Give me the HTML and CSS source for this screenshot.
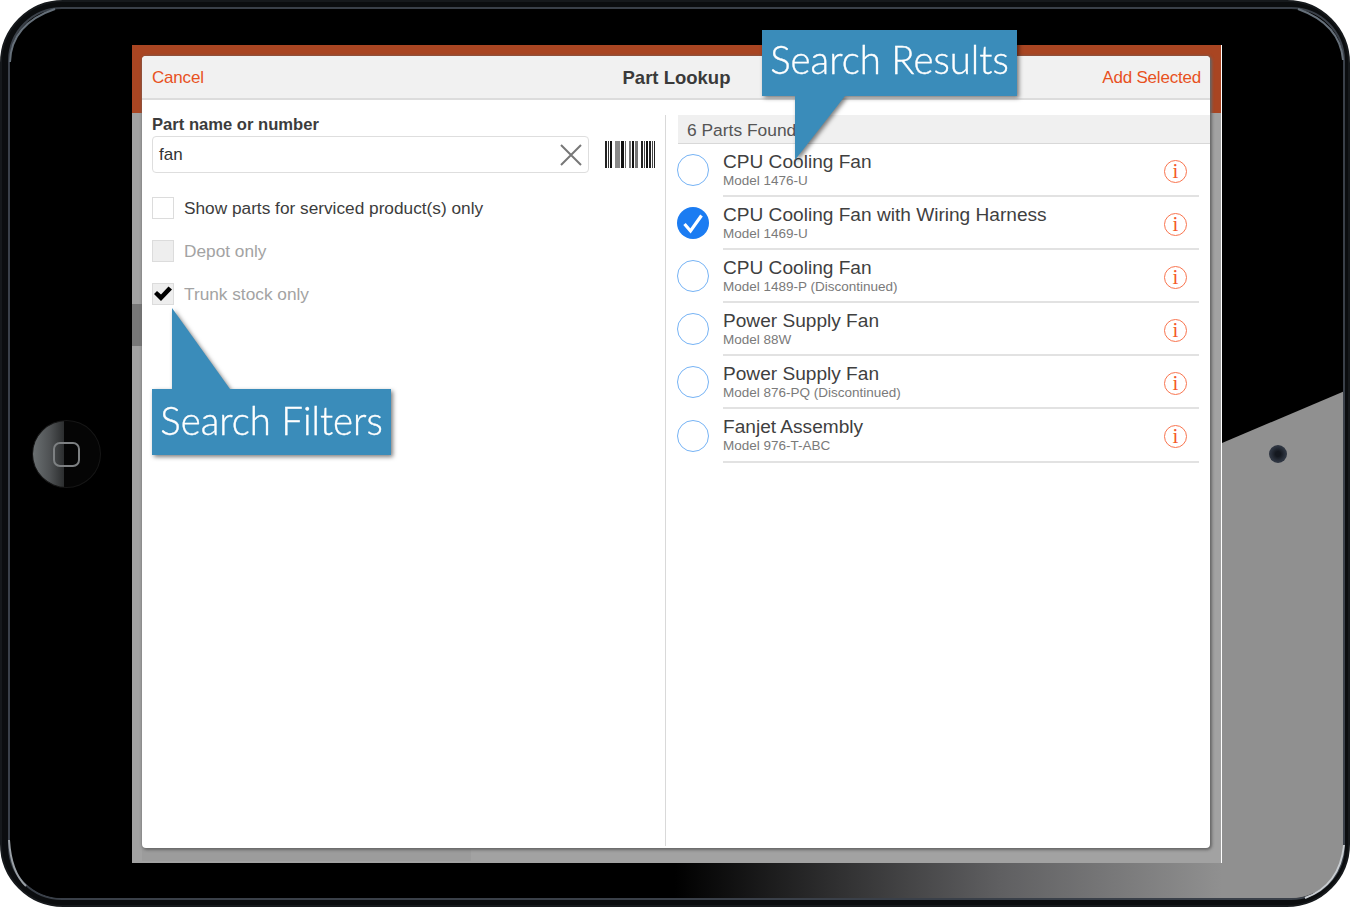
FILE: index.html
```html
<!DOCTYPE html>
<html lang="en">
<head>
    <meta charset="UTF-8">
    <title>Part Lookup</title>
    <link rel="stylesheet" href="styles.css">
</head>
<body>
    <div class="device">
        <!-- Tablet body, glare and rim -->
        <svg class="bezel" width="1350" height="907" viewBox="0 0 1350 907">
            <defs>
                <linearGradient id="glare-bottom" x1="0" y1="0" x2="1" y2="0">
                    <stop offset="0" stop-color="#000"/>
                    <stop offset="0.5" stop-color="#000"/>
                    <stop offset="0.74" stop-color="#5f5f61"/>
                    <stop offset="0.905" stop-color="#909090"/>
                    <stop offset="1" stop-color="#909090"/>
                </linearGradient>
                <clipPath id="body-clip">
                    <rect x="10" y="9" width="1333" height="889" rx="52"/>
                </clipPath>
            </defs>
            <rect x="1" y="1" width="1348" height="905" rx="62" fill="#0b0d0f" stroke="#16191c" stroke-width="2"/>
            <rect x="9" y="8" width="1335" height="891" rx="53" fill="#000" stroke="#3a4049" stroke-width="2"/>
            <g clip-path="url(#body-clip)">
                <rect x="0" y="863" width="1350" height="36" fill="url(#glare-bottom)"/>
                <polygon points="1222,443 1345,391 1345,900 1222,900" fill="#909090"/>
            </g>
            <g fill="none" stroke-width="2">
                <path d="M10 62 Q11 24 55 9" stroke="#66707a"/>
                <path d="M1343 60 Q1340 24 1298 9" stroke="#66707a"/>
                <path d="M9 840 Q11 872 26 886" stroke="#9aa0a6"/>
                <path d="M1344 845 Q1340 885 1305 898" stroke="#c8ccd0"/>
            </g>
        </svg>
        <div class="home-button"><span class="home-square"></span></div>
        <div class="camera"></div>

        <div class="screen">
            <div class="scroll-thumb"></div>
            <div class="modal">
                <div class="modal-header">
                    <a class="header-link">Cancel</a>
                    <h1>Part Lookup</h1>
                    <a class="header-link add-link">Add Selected</a>
                </div>
                <div class="modal-body">
                    <div class="filters">
                        <label class="field-label">Part name or number</label>
                        <div class="search-row">
                            <div class="search-input">
                                <span>fan</span>
                                <svg class="clear-icon" width="24" height="24" viewBox="0 0 24 24"><path d="M2 2 L22 22 M22 2 L2 22" stroke="#777" stroke-width="2" fill="none"/></svg>
                            </div>
                            <svg class="barcode" width="50" height="27" viewBox="0 0 50 27">
                                <rect x="0" width="2" height="27" fill="#222"/>
                                <rect x="3" width="1" height="27" fill="#333"/>
                                <rect x="5" width="2" height="27" fill="#111"/>
                                <rect x="10" width="5" height="27" fill="#8a8a8a"/>
                                <rect x="16" width="3" height="27" fill="#111"/>
                                <rect x="20" width="1" height="27" fill="#666"/>
                                <rect x="24" width="2" height="27" fill="#777"/>
                                <rect x="27" width="2" height="27" fill="#111"/>
                                <rect x="30" width="3" height="27" fill="#777"/>
                                <rect x="36" width="2" height="27" fill="#222"/>
                                <rect x="39" width="1" height="27" fill="#444"/>
                                <rect x="41" width="2" height="27" fill="#111"/>
                                <rect x="44" width="2" height="27" fill="#222"/>
                                <rect x="47" width="1" height="27" fill="#444"/>
                                <rect x="49" width="1" height="27" fill="#222"/>
                            </svg>
                        </div>
                        <div class="check-row">
                            <span class="checkbox"></span>
                            <span>Show parts for serviced product(s) only</span>
                        </div>
                        <div class="check-row disabled">
                            <span class="checkbox"></span>
                            <span>Depot only</span>
                        </div>
                        <div class="check-row disabled last-check">
                            <span class="checkbox">
                                <svg width="20" height="20" viewBox="0 0 20 20"><path d="M1 10 L4 7 L8 10.5 L15.5 2.5 L19 5.5 L8 17 Z" fill="#000"/></svg>
                            </span>
                            <span>Trunk stock only</span>
                        </div>
                    </div>
                    <div class="results">
                        <div class="results-head">6 Parts Found</div>
                        <div class="part-row">
                            <span class="radio"></span>
                            <div class="part-info">
                                <div class="part-text"><div class="part-name">CPU Cooling Fan</div><div class="part-model">Model 1476-U</div></div>
                                <span class="info-icon">i</span>
                            </div>
                        </div>
                        <div class="part-row">
                            <span class="radio selected">
                                <svg width="32" height="32" viewBox="0 0 32 32"><path d="M7.5 17 L13.5 24 L24.5 8.5" fill="none" stroke="#fff" stroke-width="3.2"/></svg>
                            </span>
                            <div class="part-info">
                                <div class="part-text"><div class="part-name">CPU Cooling Fan with Wiring Harness</div><div class="part-model">Model 1469-U</div></div>
                                <span class="info-icon">i</span>
                            </div>
                        </div>
                        <div class="part-row">
                            <span class="radio"></span>
                            <div class="part-info">
                                <div class="part-text"><div class="part-name">CPU Cooling Fan</div><div class="part-model">Model 1489-P (Discontinued)</div></div>
                                <span class="info-icon">i</span>
                            </div>
                        </div>
                        <div class="part-row">
                            <span class="radio"></span>
                            <div class="part-info">
                                <div class="part-text"><div class="part-name">Power Supply Fan</div><div class="part-model">Model 88W</div></div>
                                <span class="info-icon">i</span>
                            </div>
                        </div>
                        <div class="part-row">
                            <span class="radio"></span>
                            <div class="part-info">
                                <div class="part-text"><div class="part-name">Power Supply Fan</div><div class="part-model">Model 876-PQ (Discontinued)</div></div>
                                <span class="info-icon">i</span>
                            </div>
                        </div>
                        <div class="part-row">
                            <span class="radio"></span>
                            <div class="part-info">
                                <div class="part-text"><div class="part-name">Fanjet Assembly</div><div class="part-model">Model 976-T-ABC</div></div>
                                <span class="info-icon">i</span>
                            </div>
                        </div>
                    </div>
                </div>
            </div>
            <div class="screen-strip"></div>
        </div>

        <!-- Annotations on top of the screenshot -->
        <div class="callout callout-results">
            <div class="callout-box">Search Results</div>
            <svg class="callout-tail" width="50" height="64" viewBox="0 0 50 64"><polygon points="0,0 50,0 0,64" fill="#3a8cba"/></svg>
        </div>
        <div class="callout callout-filters">
            <svg class="callout-tail" width="58" height="81" viewBox="0 0 58 81"><polygon points="0,0 0,81 58,81" fill="#3a8cba"/></svg>
            <div class="callout-box">Search Filters</div>
        </div>
    </div>
</body>
</html>
```

FILE: styles.css
```css
* {
    box-sizing: border-box;
}
body {
    margin: 0;
    background-color: #fff;
    font-family: 'Liberation Sans', Arial, sans-serif;
    color: #3c3c3c;
}
.device {
    position: relative;
    width: 1350px;
    height: 907px;
    padding: 45px 0 0 132px;
}
.bezel {
    position: absolute;
    left: 0;
    top: 0;
}
.home-button {
    position: absolute;
    left: 32px;
    top: 420px;
    width: 69px;
    height: 68px;
    border-radius: 50%;
    border: 1px solid #161616;
    background: linear-gradient(90deg, #6a6f71 0%, #4f5254 25%, #2c2e2f 46%, #050505 47%, #050505 100%);
    display: flex;
    align-items: center;
    justify-content: center;
}
.home-square {
    width: 27px;
    height: 25px;
    border: 2px solid #7d8082;
    border-radius: 7px;
}
.camera {
    position: absolute;
    left: 1269px;
    top: 445px;
    width: 18px;
    height: 18px;
    border-radius: 50%;
    background: radial-gradient(circle, #14181f 20%, #2d3440 60%, #3a404a 100%);
}
.screen {
    position: relative;
    width: 1090px;
    height: 818px;
    padding: 11px 0 0 10px;
    border-right: 1px solid #fff;
    background: linear-gradient(#a94522 68px, #a2a2a2 68px);
}
.scroll-thumb {
    position: absolute;
    left: 0;
    top: 259px;
    width: 10px;
    height: 42px;
    background-color: #777;
}
.screen-strip {
    position: absolute;
    left: 10px;
    bottom: 2px;
    width: 329px;
    height: 12px;
    background-color: #9c9c9c;
}
.modal {
    position: relative;
    z-index: 1;
    width: 1068px;
    height: 792px;
    background-color: #fff;
    border-radius: 4px;
    box-shadow: 1px 1px 3px 1px #666;
    display: flex;
    flex-direction: column;
}
.modal-header {
    height: 44px;
    flex: none;
    padding: 2px 9px 0 10px;
    display: grid;
    grid-template-columns: 1fr auto 1fr;
    align-items: center;
    background-color: #f1f1f1;
    border-bottom: 2px solid #dcdcdc;
    border-radius: 4px 4px 0 0;
}
.modal-header h1 {
    margin: 0;
    font-size: 18.5px;
    font-weight: bold;
    color: #3a3a3a;
}
.header-link {
    font-size: 17px;
    letter-spacing: -0.2px;
    color: #e8511e;
}
.add-link {
    text-align: right;
}
.modal-body {
    flex: 1;
    display: flex;
    padding-top: 15px;
    padding-bottom: 2px;
}
.filters {
    width: 524px;
    flex: none;
    padding: 0 10px;
    border-right: 1px solid #d9d9d9;
}
.field-label {
    display: block;
    height: 21px;
    font-size: 16.6px;
    line-height: 20px;
    font-weight: bold;
    color: #3c3c3c;
}
.search-row {
    display: flex;
    align-items: center;
    gap: 16px;
}
.search-input {
    width: 437px;
    height: 37px;
    padding: 0 5px 0 6px;
    border: 1px solid #dedede;
    border-radius: 4px;
    display: flex;
    align-items: center;
    justify-content: space-between;
    font-size: 17px;
    color: #333;
}
.barcode {
    filter: blur(0.6px);
}
.check-row {
    display: flex;
    align-items: center;
    gap: 10px;
    height: 22px;
    margin-top: 21px;
    font-size: 17.25px;
    color: #3c3c3c;
}
.check-row > span:last-child {
    padding-top: 1px;
}
.last-check > span:last-child {
    padding-top: 0;
}
.search-row + .check-row {
    margin-top: 24px;
}
.check-row.disabled {
    color: #a3a3a3;
}
.checkbox {
    width: 22px;
    height: 22px;
    flex: none;
    border: 1px solid #dcdcdc;
    display: flex;
    align-items: center;
    justify-content: center;
}
.check-row.disabled .checkbox {
    background-color: #eee;
}
.results {
    flex: 1;
    padding-left: 12px;
}
.results-head {
    height: 29px;
    padding-left: 9px;
    font-size: 17.4px;
    line-height: 30px;
    color: #555;
    background-color: #f0f0f0;
    border-bottom: 1px solid #d8d8d8;
}
.part-row {
    height: 53.1px;
    width: 521px;
    display: flex;
    align-items: center;
    gap: 14px;
}
.radio {
    width: 32px;
    height: 32px;
    flex: none;
    margin-top: -1px;
    margin-left: -1px;
    border-radius: 50%;
    border: 1px solid #76b3f5;
}
.radio.selected {
    border: none;
    background-color: #1b7cf2;
}
.part-info {
    flex: 1;
    height: 100%;
    display: flex;
    align-items: center;
    justify-content: space-between;
    padding-right: 12px;
    border-bottom: 2px solid #e2e2e2;
}
.part-text {
    padding-top: 1px;
}
.part-name {
    font-size: 19.1px;
    line-height: 20px;
    color: #3f3f3f;
}
.part-model {
    margin-top: 1px;
    font-size: 13.5px;
    line-height: 16px;
    color: #7a7a7a;
}
.info-icon {
    width: 23px;
    height: 23px;
    margin-top: 3px;
    border: 1.5px solid #f9754f;
    border-radius: 50%;
    font-family: 'Liberation Serif', serif;
    font-size: 21px;
    line-height: 20px;
    text-align: center;
    color: #f4592b;
}
.callout {
    position: absolute;
    z-index: 2;
    display: flex;
    flex-direction: column;
    filter: drop-shadow(2px 2px 2px rgba(0, 0, 0, 0.5));
}
.callout-box {
    height: 66px;
    padding-bottom: 8px;
    display: flex;
    align-items: center;
    justify-content: center;
    font-family: Lato, 'Open Sans', sans-serif;
    font-size: 38.4px;
    font-weight: 300;
    -webkit-text-stroke: 0.35px #fff;
    color: #fff;
    background-color: #3a8cba;
}
.callout-filters .callout-box {
    padding-bottom: 5px;
}
.callout-tail {
    display: block;
}
.callout-results {
    left: 762px;
    top: 30px;
    width: 255px;
}
.callout-results .callout-tail {
    margin-left: 33px;
}
.callout-filters {
    left: 152px;
    top: 308px;
    width: 239px;
}
.callout-filters .callout-tail {
    margin-left: 20px;
}
```
